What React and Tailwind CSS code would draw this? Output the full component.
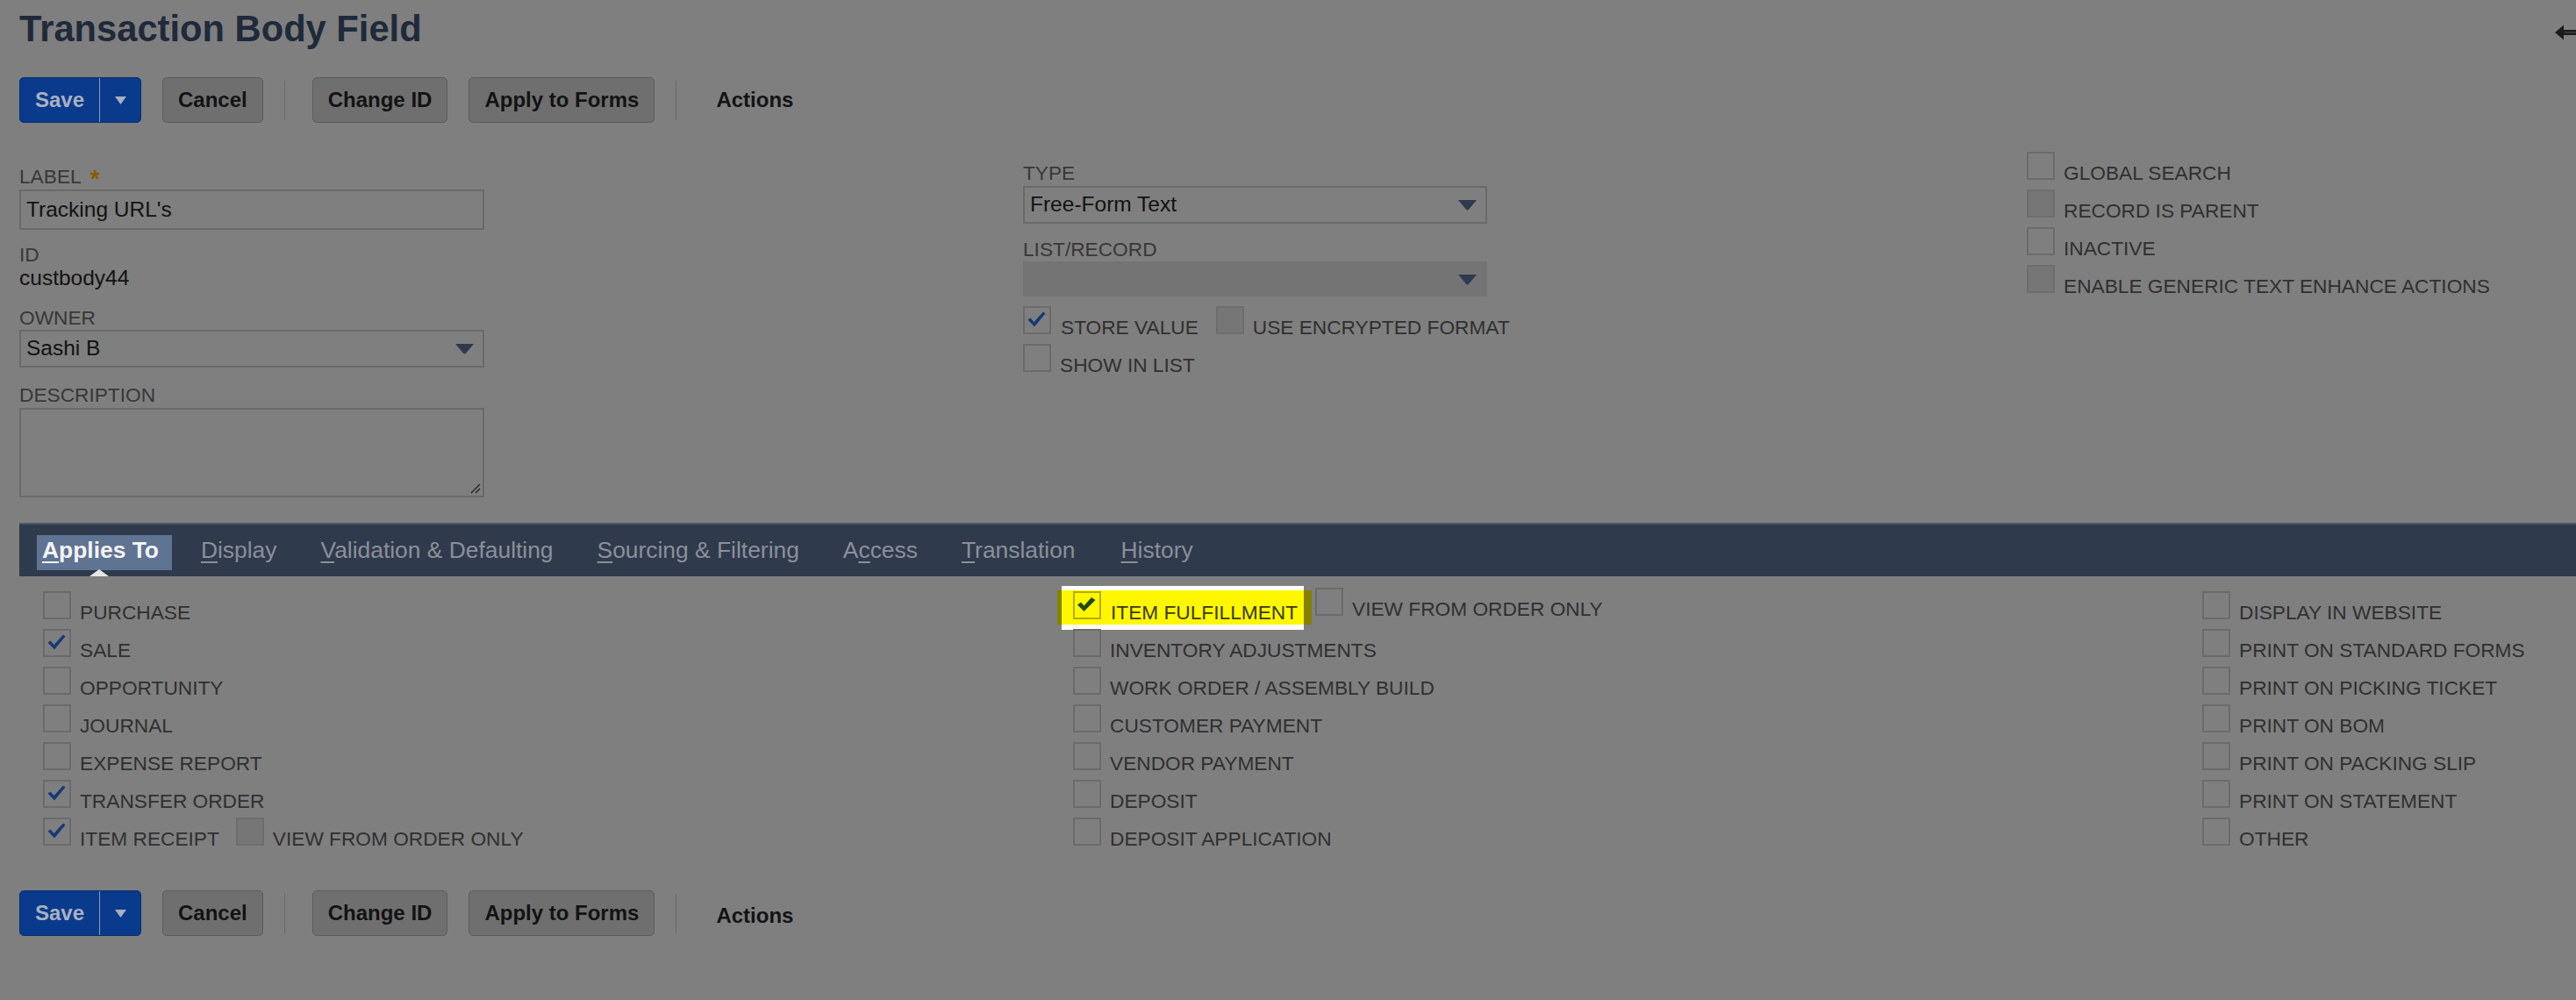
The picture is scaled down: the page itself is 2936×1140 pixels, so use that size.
import React from "react";

function Check({ hl }) {
  if (hl)
    return (
      <svg width="23" height="18" viewBox="0 0 23 18">
        <path d="M1 9.5 L5 6.5 L8.5 10.5 L17 1 L21.5 4 L8.5 17 Z" fill="#1f4b0c" />
      </svg>
    );
  return (
    <svg width="21" height="18" viewBox="0 0 21 18">
      <path d="M0.5 9.5 L3.5 7.5 L7.5 12 L18 0.5 L20.5 2.5 L8 17.5 Z" fill="#153a76" />
    </svg>
  );
}

function Box({ checked, disabled, hl }) {
  const cls = hl
    ? "border-[#b3ad00] pl-[2px]"
    : disabled
    ? "border-[#6e6e6e] bg-[#767676] pl-[3px]"
    : "border-[#6b6b6b] pl-[3px]";
  return (
    <div className={`relative w-[32px] h-[32px] border-2 shrink-0 flex items-start pt-[4px] ${cls}`}>
      {checked && <Check hl={hl} />}
    </div>
  );
}

function CbLabel({ children, gap = "ml-[10px]" }) {
  return (
    <span className={`${gap} text-[22.7px] leading-[16px] text-[#303030] whitespace-nowrap`}>{children}</span>
  );
}

function CbRow({ label, checked, disabled, children }) {
  return (
    <div className="flex items-end h-[32px]">
      <Box checked={checked} disabled={disabled} />
      <CbLabel>{label}</CbLabel>
      {children}
    </div>
  );
}

function Tri() {
  return (
    <svg width="23" height="13" viewBox="0 0 23 13">
      <path d="M1 1 H22 L13 11.8 Q11.5 13.4 10 11.8 Z" fill="#2f3a4e" />
    </svg>
  );
}

function Btn({ children, className = "" }) {
  return (
    <div
      className={`h-[52px] px-[17px] rounded-[5px] bg-[#6f6f6f] border border-[#5d5d5d] flex items-center text-[24px] font-bold text-[#131313] whitespace-nowrap ${className}`}
    >
      {children}
    </div>
  );
}

function Sep({ className = "" }) {
  return <div className={`w-px h-[45px] bg-[#6a6a6a] ${className}`} />;
}

function ButtonBar({ className = "", actionsClass = "" }) {
  return (
    <div className={`flex items-center pl-[22px] h-[52px] ${className}`}>
      <div className="flex h-[52px] rounded-[5px] bg-[#0a3a8c] border border-[#07316f] overflow-hidden">
        <div className="w-[90px] flex items-center justify-center text-[24px] font-bold text-[#a9b1c0]">Save</div>
        <div className="w-px bg-[#8f9ab0]" />
        <div className="w-[46px] flex items-center justify-center">
          <svg width="13" height="9" viewBox="0 0 13 9">
            <path d="M0 0 H13 L6.5 9 Z" fill="#a9b1c0" />
          </svg>
        </div>
      </div>
      <Btn className="ml-[24px]">Cancel</Btn>
      <Sep className="ml-[24px]" />
      <Btn className="ml-[31px]">Change ID</Btn>
      <Btn className="ml-[24px]">Apply to Forms</Btn>
      <Sep className="ml-[24px]" />
      <div className={`ml-[45px] text-[24px] font-bold text-[#131313] ${actionsClass}`}>Actions</div>
    </div>
  );
}

function FieldLabel({ children, className = "" }) {
  return (
    <div className={`h-[26px] text-[22.7px] leading-[26px] text-[#383838] whitespace-nowrap ${className}`}>{children}</div>
  );
}

function Tab({ text, k, gap = "ml-[50px]" }) {
  return (
    <span className={`${gap} text-[26.4px] leading-[34px] text-[#8b9099] whitespace-nowrap`}>
      {text.slice(0, k)}
      <span className="underline underline-offset-[4px] decoration-[1.5px]">{text[k]}</span>
      {text.slice(k + 1)}
    </span>
  );
}

export default function App() {
  return (
    <div className="w-[2936px] h-[1140px] bg-[#7f7f7f] overflow-hidden font-['Liberation_Sans',Arial,Helvetica,sans-serif]">
      {/* header */}
      <div className="flex items-start pt-[9px] pl-[22px]">
        <h1 className="text-[41.7px] leading-[48px] font-bold text-[#1f2a3a] whitespace-nowrap">Transaction Body Field</h1>
        <svg className="ml-auto mt-[19px] shrink-0" width="24" height="18" viewBox="0 0 24 18">
          <path d="M0 9 L10 0.5 L10 17.5 Z" fill="#1b1b1b" />
          <rect x="9" y="6" width="15" height="6" fill="#1b1b1b" />
          <rect x="11" y="8.4" width="13" height="1.2" fill="#4a4a4a" />
        </svg>
      </div>

      <ButtonBar className="mt-[31px]" />

      {/* main form */}
      <div className="grid grid-cols-[1144px_1144px_1fr] pl-[22px] mt-[44px]">
        <div className="flex flex-col pt-[3px]">
          <FieldLabel>
            LABEL
            <span className="relative top-[4px] ml-[10px] text-[28px] font-bold text-[#8a5b00]">*</span>
          </FieldLabel>
          <div className="mt-[3px] w-[530px] h-[46px] border-2 border-[#6a6a6a] px-[6px] flex items-center text-[24.5px] text-[#121212]">
            Tracking URL's
          </div>
          <FieldLabel className="mt-[15px]">ID</FieldLabel>
          <div className="h-[28px] text-[24.5px] leading-[28px] text-[#121212]">custbody44</div>
          <FieldLabel className="mt-[18px]">OWNER</FieldLabel>
          <div className="mt-[1px] w-[530px] h-[43px] border-2 border-[#6a6a6a] pl-[6px] pr-[9px] flex items-center justify-between text-[24.5px] text-[#121212]">
            <span>Sashi B</span>
            <Tri />
          </div>
          <FieldLabel className="mt-[18px]">DESCRIPTION</FieldLabel>
          <div className="mt-[2px] w-[530px] h-[102px] border-2 border-[#6a6a6a] flex items-end justify-end p-[2px]">
            <svg width="14" height="14" viewBox="0 0 14 14">
              <path d="M13 3 L3 13 M13 8 L8 13" stroke="#1e1e1e" strokeWidth="1.2" />
            </svg>
          </div>
        </div>

        <div className="flex flex-col">
          <FieldLabel>TYPE</FieldLabel>
          <div className="mt-[2px] w-[529px] h-[43px] border-2 border-[#6a6a6a] pl-[6px] pr-[9px] flex items-center justify-between text-[24.5px] text-[#121212]">
            <span>Free-Form Text</span>
            <Tri />
          </div>
          <FieldLabel className="mt-[16px]">LIST/RECORD</FieldLabel>
          <div className="mt-[1px] w-[529px] h-[40px] bg-[#747474] pr-[11px] flex items-center justify-end">
            <Tri />
          </div>
          <div className="mt-[11px] flex items-end h-[32px]">
            <Box checked />
            <CbLabel gap="ml-[11px]">STORE VALUE</CbLabel>
            <div className="ml-[20px] flex items-end">
              <Box disabled />
              <CbLabel>USE ENCRYPTED FORMAT</CbLabel>
            </div>
          </div>
          <div className="mt-[11px]">
            <CbRow label="SHOW IN LIST" />
          </div>
        </div>

        <div className="flex flex-col gap-[11px] -mt-[11px]">
          <CbRow label="GLOBAL SEARCH" />
          <CbRow label="RECORD IS PARENT" disabled />
          <CbRow label="INACTIVE" />
          <CbRow label="ENABLE GENERIC TEXT ENHANCE ACTIONS" disabled />
        </div>
      </div>

      {/* tab bar */}
      <div className="mt-[29px] ml-[22px] h-[61px] bg-[#2f3a4c] border-t-2 border-[#4c5666] flex items-start pt-[12px] pl-[20px]">
        <div className="relative h-[40px] pl-[6px] pr-[15px] bg-[#5f7392] text-[26.4px] leading-[34px] font-bold text-[#f4f4f4] whitespace-nowrap">
          <span className="underline underline-offset-[4px] decoration-[1.5px]">A</span>pplies To
          <div className="absolute left-[60px] bottom-[-7px] w-0 h-0 border-l-[11px] border-r-[11px] border-b-[8px] border-l-transparent border-r-transparent border-b-[#e6e6e6]" />
        </div>
        <Tab text="Display" k={0} gap="ml-[33px]" />
        <Tab text="Validation & Defaulting" k={0} />
        <Tab text="Sourcing & Filtering" k={0} />
        <Tab text="Access" k={1} />
        <Tab text="Translation" k={0} />
        <Tab text="History" k={0} gap="ml-[52px]" />
      </div>

      {/* applies to */}
      <div className="mt-[17px] pl-[49px] grid grid-cols-[1174px_1287px_1fr]">
        <div className="flex flex-col gap-[11px]">
          <CbRow label="PURCHASE" />
          <CbRow label="SALE" checked />
          <CbRow label="OPPORTUNITY" />
          <CbRow label="JOURNAL" />
          <CbRow label="EXPENSE REPORT" />
          <CbRow label="TRANSFER ORDER" checked />
          <CbRow label="ITEM RECEIPT" checked>
            <div className="ml-[19px] flex items-end">
              <Box disabled />
              <CbLabel>VIEW FROM ORDER ONLY</CbLabel>
            </div>
          </CbRow>
        </div>

        <div className="flex flex-col gap-[11px]">
          <div className="flex items-start h-[32px]">
            <div className="relative -ml-[18px] -mt-[1px] pl-[18px] pr-[16px] pt-[1px] pb-[6px] bg-[#858100] flex items-end">
              <div className="absolute left-[5px] right-[9px] top-[-5px] bottom-[-6px] bg-white">
                <div className="absolute inset-x-0 top-[5px] bottom-[6px] bg-[#fff700]" />
              </div>
              <Box checked hl />
              <span className="relative ml-[11px] text-[22.7px] leading-[16px] text-[#393900] whitespace-nowrap">
                ITEM FULFILLMENT
              </span>
            </div>
            <div className="ml-[4px] -mt-[4px] flex items-end">
              <Box />
              <CbLabel>VIEW FROM ORDER ONLY</CbLabel>
            </div>
          </div>
          <CbRow label="INVENTORY ADJUSTMENTS" />
          <CbRow label="WORK ORDER / ASSEMBLY BUILD" />
          <CbRow label="CUSTOMER PAYMENT" />
          <CbRow label="VENDOR PAYMENT" />
          <CbRow label="DEPOSIT" />
          <CbRow label="DEPOSIT APPLICATION" />
        </div>

        <div className="flex flex-col gap-[11px]">
          <CbRow label="DISPLAY IN WEBSITE" />
          <CbRow label="PRINT ON STANDARD FORMS" />
          <CbRow label="PRINT ON PICKING TICKET" />
          <CbRow label="PRINT ON BOM" />
          <CbRow label="PRINT ON PACKING SLIP" />
          <CbRow label="PRINT ON STATEMENT" />
          <CbRow label="OTHER" />
        </div>
      </div>

      <ButtonBar className="mt-[51px]" actionsClass="mt-[6px]" />
    </div>
  );
}
